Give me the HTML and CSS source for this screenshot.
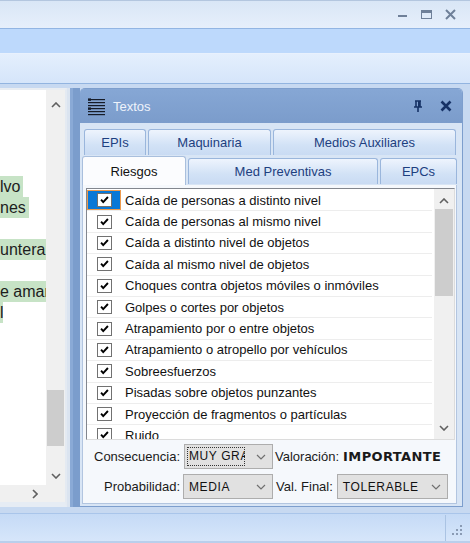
FILE: index.html
```html
<!DOCTYPE html>
<html>
<head>
<meta charset="utf-8">
<link rel="stylesheet" href="styles.css">
</head>
<body>
<div class="win">
  <div class="titlebar">
    <div class="ctrls">
      <svg class="ctl" width="12" height="12" viewBox="0 0 12 12"><rect x="1" y="6" width="9" height="2" fill="#6f8099"/></svg>
      <svg class="ctl" width="12" height="12" viewBox="0 0 12 12"><rect x="0.5" y="1.5" width="10" height="8" fill="none" stroke="#6f8099"/><rect x="0.5" y="1.5" width="10" height="2.5" fill="#6f8099"/></svg>
      <svg class="ctl" width="12" height="12" viewBox="0 0 12 12"><path d="M1 1 L10 10 M10 1 L1 10" stroke="#6f8099" stroke-width="2"/></svg>
    </div>
  </div>
  <div class="band1"></div>
  <div class="band2"></div>
  <div class="main">
    <div class="lpanel">
      <div class="lp-top">
        <div class="lp-text">
          <div class="ln"><span class="hl">lvo</span></div>
          <div class="ln"><span class="hl">nes</span></div>
          <div class="ln"></div>
          <div class="ln"><span class="hl">untera reforzada</span></div>
          <div class="ln"></div>
          <div class="ln"><span class="hl">e amarillo</span></div>
          <div class="ln"><span class="hl frag">l</span></div>
        </div>
        <div class="vscroll">
          <svg class="chev" width="10" height="6" viewBox="0 0 10 6"><path d="M1 5 L5 1 L9 5" fill="none" stroke="#606060" stroke-width="1.6"/></svg>
          <div class="vtrack"><div class="vthumb"></div></div>
          <svg class="chev" width="10" height="6" viewBox="0 0 10 6"><path d="M1 1 L5 5 L9 1" fill="none" stroke="#606060" stroke-width="1.6"/></svg>
        </div>
      </div>
      <div class="lp-bottom">
        <div class="hscroll">
          <svg width="6" height="10" viewBox="0 0 6 10"><path d="M1 1 L5 5 L1 9" fill="none" stroke="#606060" stroke-width="1.6"/></svg>
        </div>
        <div class="corner"></div>
      </div>
    </div>
    <div class="splitter"></div>
    <div class="rpanel">
      <div class="rp-head">
        <svg class="hicon" width="17" height="18" viewBox="0 0 17 18">
          <rect x="0" y="1" width="17" height="1.2" fill="#161c28"/>
          <rect x="0" y="0.4" width="3" height="2.4" fill="#161c28"/>
          <rect x="0" y="4" width="17" height="1.2" fill="#161c28"/>
          <rect x="0" y="7" width="17" height="1.2" fill="#161c28"/>
          <rect x="0" y="10" width="17" height="1.2" fill="#161c28"/>
          <rect x="0" y="9.4" width="3" height="2.4" fill="#161c28"/>
          <rect x="0" y="13" width="17" height="1.2" fill="#161c28"/>
          <rect x="0" y="16" width="17" height="1.2" fill="#161c28"/>
        </svg>
        <span class="htitle">Textos</span>
        <svg class="pin" width="10" height="13" viewBox="0 0 10 13"><path d="M2 1 H8 M3 1 V7 M7 1 V7 M1 7 H9 M5 7 V12" fill="none" stroke="#163266" stroke-width="1.6"/><rect x="5" y="1" width="2" height="6" fill="#163266"/></svg>
        <svg class="hclose" width="12" height="12" viewBox="0 0 12 12"><path d="M1.5 1.5 L10.5 10.5 M10.5 1.5 L1.5 10.5" stroke="#163266" stroke-width="2.6"/></svg>
      </div>
      <div class="rp-body">
        <div class="tabrow r1">
          <div class="tab w-epis">EPIs</div>
          <div class="tab w-maq">Maquinaria</div>
          <div class="tab w-med">Medios Auxiliares</div>
        </div>
        <div class="tabrow r2">
          <div class="tab sel w-rie">Riesgos</div>
          <div class="tab w-prev">Med Preventivas</div>
          <div class="tab w-epc">EPCs</div>
        </div>
        <div class="page">
          <div class="list">
            <div class="rows">
              <div class="row"><span class="cbwrap focus"><svg class="cb" viewBox="0 0 15 14"><path d="M3.5 6.5 L6 9.5 L11.5 3.5" fill="none" stroke="#000" stroke-width="2.2"/></svg></span><span class="lbl">Caída de personas a distinto nivel</span></div>
              <div class="row"><span class="cbwrap"><svg class="cb" viewBox="0 0 15 14"><path d="M3.5 6.5 L6 9.5 L11.5 3.5" fill="none" stroke="#000" stroke-width="2.2"/></svg></span><span class="lbl">Caída de personas al mismo nivel</span></div>
              <div class="row"><span class="cbwrap"><svg class="cb" viewBox="0 0 15 14"><path d="M3.5 6.5 L6 9.5 L11.5 3.5" fill="none" stroke="#000" stroke-width="2.2"/></svg></span><span class="lbl">Caída a distinto nivel de objetos</span></div>
              <div class="row"><span class="cbwrap"><svg class="cb" viewBox="0 0 15 14"><path d="M3.5 6.5 L6 9.5 L11.5 3.5" fill="none" stroke="#000" stroke-width="2.2"/></svg></span><span class="lbl">Caída al mismo nivel de objetos</span></div>
              <div class="row"><span class="cbwrap"><svg class="cb" viewBox="0 0 15 14"><path d="M3.5 6.5 L6 9.5 L11.5 3.5" fill="none" stroke="#000" stroke-width="2.2"/></svg></span><span class="lbl">Choques contra objetos móviles o inmóviles</span></div>
              <div class="row"><span class="cbwrap"><svg class="cb" viewBox="0 0 15 14"><path d="M3.5 6.5 L6 9.5 L11.5 3.5" fill="none" stroke="#000" stroke-width="2.2"/></svg></span><span class="lbl">Golpes o cortes por objetos</span></div>
              <div class="row"><span class="cbwrap"><svg class="cb" viewBox="0 0 15 14"><path d="M3.5 6.5 L6 9.5 L11.5 3.5" fill="none" stroke="#000" stroke-width="2.2"/></svg></span><span class="lbl">Atrapamiento por o entre objetos</span></div>
              <div class="row"><span class="cbwrap"><svg class="cb" viewBox="0 0 15 14"><path d="M3.5 6.5 L6 9.5 L11.5 3.5" fill="none" stroke="#000" stroke-width="2.2"/></svg></span><span class="lbl">Atrapamiento o atropello por vehículos</span></div>
              <div class="row"><span class="cbwrap"><svg class="cb" viewBox="0 0 15 14"><path d="M3.5 6.5 L6 9.5 L11.5 3.5" fill="none" stroke="#000" stroke-width="2.2"/></svg></span><span class="lbl">Sobreesfuerzos</span></div>
              <div class="row"><span class="cbwrap"><svg class="cb" viewBox="0 0 15 14"><path d="M3.5 6.5 L6 9.5 L11.5 3.5" fill="none" stroke="#000" stroke-width="2.2"/></svg></span><span class="lbl">Pisadas sobre objetos punzantes</span></div>
              <div class="row"><span class="cbwrap"><svg class="cb" viewBox="0 0 15 14"><path d="M3.5 6.5 L6 9.5 L11.5 3.5" fill="none" stroke="#000" stroke-width="2.2"/></svg></span><span class="lbl">Proyección de fragmentos o partículas</span></div>
              <div class="row"><span class="cbwrap"><svg class="cb" viewBox="0 0 15 14"><path d="M3.5 6.5 L6 9.5 L11.5 3.5" fill="none" stroke="#000" stroke-width="2.2"/></svg></span><span class="lbl">Ruido</span></div>
            </div>
            <div class="lscroll">
              <svg class="chev" width="10" height="6" viewBox="0 0 10 6"><path d="M1 5 L5 1 L9 5" fill="none" stroke="#606060" stroke-width="1.6"/></svg>
              <div class="ltrack"><div class="lthumb"></div></div>
              <svg class="chev" width="10" height="6" viewBox="0 0 10 6"><path d="M1 1 L5 5 L9 1" fill="none" stroke="#606060" stroke-width="1.6"/></svg>
            </div>
          </div>
          <div class="frow f1">
            <span class="flabel l1">Consecuencia:</span>
            <div class="combo c1"><span class="ctext focusrect">MUY GRAVE</span><svg class="cchev" width="10" height="6" viewBox="0 0 10 6"><path d="M1 1 L5 5 L9 1" fill="none" stroke="#707070" stroke-width="1.2"/></svg></div>
            <span class="ftext">Valoración:</span>
            <span class="fbold">IMPORTANTE</span>
          </div>
          <div class="frow f2">
            <span class="flabel l2">Probabilidad:</span>
            <div class="combo c2"><span class="ctext">MEDIA</span><svg class="cchev" width="10" height="6" viewBox="0 0 10 6"><path d="M1 1 L5 5 L9 1" fill="none" stroke="#707070" stroke-width="1.2"/></svg></div>
            <span class="ftext vf">Val. Final:</span>
            <div class="combo c3"><span class="ctext">TOLERABLE</span><svg class="cchev" width="10" height="6" viewBox="0 0 10 6"><path d="M1 1 L5 5 L9 1" fill="none" stroke="#707070" stroke-width="1.2"/></svg></div>
          </div>
        </div>
      </div>
    </div>
  </div>
  <div class="status">
    <div class="sep"></div>
    <svg class="grip" width="14" height="14" viewBox="0 0 14 14" fill="#8a9bb4">
      <rect x="11" y="2" width="2" height="2"/>
      <rect x="7" y="6" width="2" height="2"/><rect x="11" y="6" width="2" height="2"/>
      <rect x="3" y="10" width="2" height="2"/><rect x="7" y="10" width="2" height="2"/><rect x="11" y="10" width="2" height="2"/>
    </svg>
  </div>
</div>
</body>
</html>
```
FILE: styles.css
```css
html, body { margin: 0; padding: 0; }
body { width: 470px; height: 543px; overflow: hidden; font-family: "Liberation Sans", Arial, sans-serif; background: #c5d8f1; }
.win { width: 470px; height: 543px; display: flex; flex-direction: column; }

.titlebar { height: 27px; border-top: 1px solid #b3c6df; background: linear-gradient(#d9e6f6, #e6effb); display: flex; justify-content: flex-end; align-items: center; }
.ctrls { display: flex; gap: 12px; padding-right: 13px; margin-top: 1px; }
.band1 { height: 24px; border-top: 1px solid #92b5e3; background: #bdd9fc; }
.band2 { height: 29px; border-top: 1px solid #e8f1fd; border-bottom: 1px solid #92b4e0; background: linear-gradient(#e4effd, #d5e5fa); }

.main { height: 429px; display: flex; padding: 4px 7px 6px 0; box-sizing: border-box; background: #c7d9f1; }

.lpanel { width: 65px; border-right: 2px solid #e4eaf2; border-top: 2px solid #e9edf2; border-bottom: 5px solid #e6ecf4; display: flex; flex-direction: column; background: #fff; }
.lp-top { flex: 1; display: flex; min-height: 0; }
.lp-text { width: 46px; overflow: hidden; padding-top: 86px; font-size: 16px; color: #1d1d1d; }
.ln { height: 21px; line-height: 21px; white-space: nowrap; }
.hl { display: inline-block; background: #c7e3c6; padding-right: 3px; }
.frag { width: 3px; padding: 0; overflow: hidden; vertical-align: top; }
.vscroll { width: 19px; background: #f0f0f0; display: flex; flex-direction: column; align-items: center; padding: 12px 0 6px; box-sizing: border-box; }
.vtrack { flex: 1; width: 100%; display: flex; flex-direction: column; justify-content: flex-end; padding-bottom: 27px; }
.vthumb { height: 56px; margin: 0 1px; background: #cdcdcd; }
.lp-bottom { height: 17px; display: flex; background: #f0f0f0; }
.hscroll { width: 46px; display: flex; align-items: center; justify-content: flex-end; padding-right: 8px; box-sizing: border-box; }
.corner { flex: 1; }

.splitter { width: 13px; background: linear-gradient(to right, #dbe4f0 0 3px, #8aaad6 3px 6px, #7b9dcc 6px 13px); }

.rpanel { flex: 1; display: flex; flex-direction: column; border-radius: 5px 5px 0 0; background: #d6e3f4; border: 1px solid #7d9ecd; border-left: none; }
.rp-head { height: 34px; background: linear-gradient(#86a7d5, #7b9ccb); border-radius: 4px 4px 0 0; display: flex; align-items: center; padding-left: 8px; }
.hicon { margin-top: 2px; }
.htitle { margin-left: 8px; font-size: 13px; color: #eef3fb; flex: 1; }
.pin { margin-right: 17px; }
.hclose { margin-right: 10px; }

.rp-body { flex: 1; display: flex; flex-direction: column; padding: 6px 5px 0 2px; background: #d8e5f5; }
.tabrow { display: flex; align-items: flex-end; }
.r1 { height: 26px; padding-left: 2px; gap: 2px; }
.r2 { height: 29px; gap: 2px; margin-top: 1px; }
.tab { box-sizing: border-box; height: 26px; display: flex; align-items: center; justify-content: center; font-size: 13px; color: #1d3f80; border: 1px solid #9ab6dc; border-bottom: none; border-radius: 3px 3px 0 0; background: linear-gradient(#eef4fd, #d2e2f6 60%, #c9dbf3); }
.r2 .tab { margin-bottom: 1px; }
.tab.sel { height: 29px; margin-bottom: 0; background: #fbfcfe; color: #111; border-color: #a9bfdd; }
.w-epis { width: 62px; }
.w-maq { width: 123px; }
.w-med { width: 183px; }
.w-rie { width: 104px; }
.w-prev { width: 190px; }
.w-epc { width: 77px; }

.page { flex: 1; background: #f5f8fc; border: 1px solid #b2c5e0; border-top: none; padding: 3px 1px 0 3px; display: flex; flex-direction: column; margin-bottom: 2px; }
.list { height: 250px; border: 1px solid #82868e; border-right-color: #dcdcdc; border-bottom-color: #dcdcdc; background: #fff; display: flex; }
.rows { flex: 1; overflow: hidden; padding-top: 1px; }
.row { height: 21.4px; flex: none; box-sizing: border-box; border-bottom: 1px solid #ededed; display: flex; align-items: center; margin-right: 2px; }
.cbwrap { width: 34px; height: 20px; display: flex; align-items: center; justify-content: center; box-sizing: border-box; }
.cbwrap.focus { background: #0a78d7; border: 1px solid #ec9a4e; }
.cb { width: 15px; height: 14px; box-sizing: border-box; border: 1px solid #717171; background: #fff; }
.lbl { margin-left: 4px; font-size: 13px; color: #111; white-space: nowrap; }
.lscroll { width: 20px; background: #f0f0f0; display: flex; flex-direction: column; align-items: center; padding: 9px 0 8px; box-sizing: border-box; }
.ltrack { flex: 1; width: 100%; padding-top: 5px; }
.lthumb { height: 87px; margin: 0 1px; background: #cdcdcd; }

.frow { display: flex; align-items: center; font-size: 13px; color: #1a1a1a; }
.f1 { height: 25px; margin-top: 4px; }
.f2 { height: 25px; margin-top: 5px; }
.flabel { text-align: right; }
.l1 { width: 94px; padding-right: 2px; }
.l2 { width: 94px; padding-right: 1px; }
.combo { box-sizing: border-box; height: 25px; background: #e1e1e1; border: 1px solid #adadad; display: flex; align-items: center; position: relative; }
.c1 { width: 89px; margin-left: 2px; }
.c2 { width: 90px; margin-left: 2px; }
.c3 { width: 111px; margin-left: 4px; }
.ctext { font-size: 12px; letter-spacing: 0.6px; color: #111; padding-left: 5px; white-space: nowrap; overflow: hidden; flex: 1; }
.focusrect { flex: none; width: 58px; margin-left: 2px; padding-left: 2px; height: 19px; line-height: 19px; box-sizing: border-box; outline: 1px dotted #333; outline-offset: -1px; }
.cchev { margin-right: 6px; margin-left: auto; }
.ftext { margin-left: 2px; }
.vf { margin-left: 3px; }
.fbold { margin-left: 4px; font-family: "DejaVu Sans", sans-serif; font-weight: bold; font-size: 13px; letter-spacing: 0.4px; }

.status { height: 30px; box-sizing: border-box; border-top: 1px solid #a9c5ea; border-bottom: 2px solid #b9cfec; background: linear-gradient(#c5daf6, #d6e6fa); display: flex; justify-content: flex-end; align-items: center; }
.sep { width: 1px; height: 26px; background: #aac3e3; margin-right: 3px; }
.grip { margin-right: 7px; margin-top: 4px; }
```
